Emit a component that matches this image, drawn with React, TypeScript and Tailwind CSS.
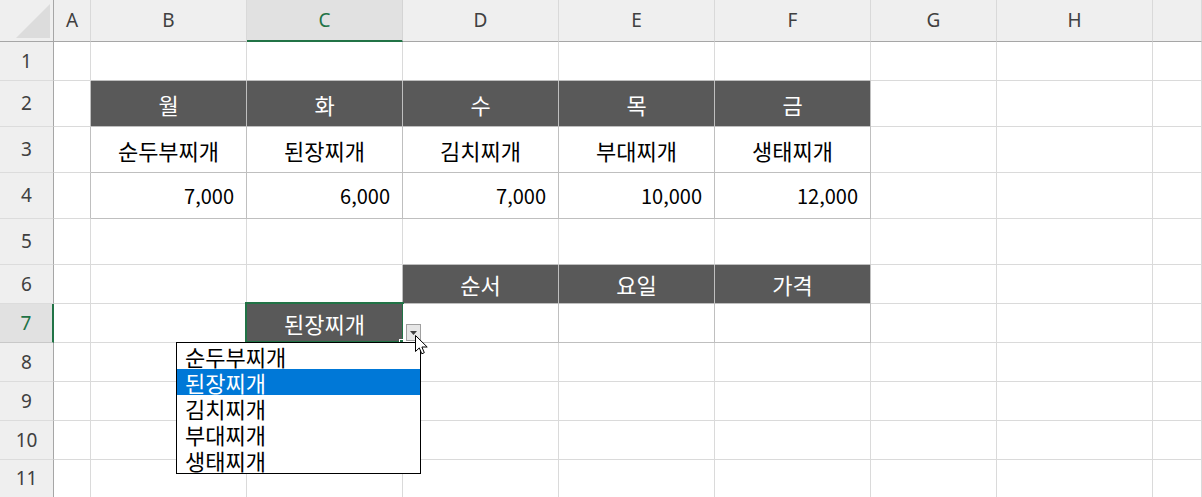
import React from "react";

const letters = ["", "A", "B", "C", "D", "E", "F", "G", "H", ""];
const rowCount = 11;

type Cell = { text: string; dark?: boolean; num?: boolean };

const data: Record<string, Cell> = {
  "2-2": { text: "월", dark: true },
  "2-3": { text: "화", dark: true },
  "2-4": { text: "수", dark: true },
  "2-5": { text: "목", dark: true },
  "2-6": { text: "금", dark: true },
  "3-2": { text: "순두부찌개" },
  "3-3": { text: "된장찌개" },
  "3-4": { text: "김치찌개" },
  "3-5": { text: "부대찌개" },
  "3-6": { text: "생태찌개" },
  "4-2": { text: "7,000", num: true },
  "4-3": { text: "6,000", num: true },
  "4-4": { text: "7,000", num: true },
  "4-5": { text: "10,000", num: true },
  "4-6": { text: "12,000", num: true },
  "6-4": { text: "순서", dark: true },
  "6-5": { text: "요일", dark: true },
  "6-6": { text: "가격", dark: true },
  "7-3": { text: "된장찌개", dark: true },
};

const menu = ["순두부찌개", "된장찌개", "김치찌개", "부대찌개", "생태찌개"];

function inTable(r: number, c: number) {
  return (r >= 2 && r <= 4 && c >= 2 && c <= 6) || (r >= 6 && r <= 7 && c >= 4 && c <= 6);
}

function ColHeader({ c }: { c: number }) {
  const active = c === 3;
  return (
    <div
      className={
        active
          ? "flex items-center justify-center bg-[#e1e1e1] border-r border-r-[#d4d4d4] border-b-2 border-b-[#217346] text-[#217346] text-[19px] font-['Noto_Sans',sans-serif]"
          : "flex items-center justify-center bg-[#efefef] border-r border-r-[#d9d9d9] border-b border-b-[#a6a6a6] text-[#404040] text-[19px] font-['Noto_Sans',sans-serif]"
      }
    >
      {letters[c]}
    </div>
  );
}

function RowHeader({ r }: { r: number }) {
  const active = r === 7;
  return (
    <div
      className={
        active
          ? "flex items-center justify-center bg-[#e1e1e1] border-r-2 border-r-[#217346] border-b border-b-[#c8c8c8] text-[#217346] text-[19px] font-['Noto_Sans',sans-serif]"
          : "flex items-center justify-center bg-[#efefef] border-r border-r-[#a6a6a6] border-b border-b-[#dcdcdc] text-[#404040] text-[19px] font-['Noto_Sans',sans-serif]"
      }
    >
      {r}
    </div>
  );
}

function DataCell({ r, c }: { r: number; c: number }) {
  const cell = data[`${r}-${c}`];
  const right = inTable(r, c) || inTable(r, c + 1) ? "border-r-[#bfbfbf]" : "border-r-[#dadada]";
  const bottom = inTable(r, c) || inTable(r + 1, c) ? "border-b-[#bfbfbf]" : "border-b-[#dadada]";
  const bg = cell?.dark ? "bg-[#595959] text-white" : "bg-white text-black";
  const type = cell?.num ? "justify-end pr-3 text-[20px]" : "justify-center text-[22px]";
  const selected = r === 7 && c === 3;
  return (
    <div className={`relative flex items-center border-r border-b leading-none font-['Noto_Sans_CJK_KR',sans-serif] ${right} ${bottom} ${bg} ${type}`}>
      {cell?.text}
      {selected && (
        <>
          <div className="absolute -left-[2px] -top-[2px] -right-[2px] -bottom-[1px] border-2 border-[#217346]" />
          <div className="absolute -right-[3px] -bottom-[3px] w-[6px] h-[6px] bg-[#217346] border border-white" />
        </>
      )}
    </div>
  );
}

function Cursor() {
  return (
    <svg width="14" height="22" viewBox="0 0 14 22" className="absolute left-[415px] top-[335px]">
      <path
        d="M0.5 0.5 L0.5 16.5 L4.3 12.9 L6.8 18.8 L9.3 17.7 L6.9 12 L12.2 12 Z"
        fill="white"
        stroke="black"
        strokeWidth="1"
      />
    </svg>
  );
}

export default function App() {
  const rows = Array.from({ length: rowCount }, (_, i) => i + 1);
  const cols = Array.from({ length: 9 }, (_, i) => i + 1);
  return (
    <div className="relative w-[1202px] h-[497px] overflow-hidden bg-white">
      <div className="grid grid-cols-[54px_37px_156px_156px_156px_156px_156px_126px_156px_49px] grid-rows-[42px_39px_46px_46px_46px_46px_39px_39px_39px_39px_39px_38px]">
        <div className="relative bg-[#efefef] border-r border-r-[#a6a6a6] border-b border-b-[#a6a6a6]">
          <svg width="34" height="34" viewBox="0 0 34 34" className="absolute right-[3px] bottom-[3px]">
            <polygon points="34,0 34,34 0,34" fill="#dcdcdc" />
          </svg>
        </div>
        {cols.map((c) => (
          <ColHeader key={`h-${c}`} c={c} />
        ))}
        {rows.map((r) => (
          <React.Fragment key={`r-${r}`}>
            <RowHeader r={r} />
            {cols.map((c) => (
              <DataCell key={`${r}-${c}`} r={r} c={c} />
            ))}
          </React.Fragment>
        ))}
      </div>

      <div className="absolute left-[406px] top-[324px] w-[15px] h-[17px] bg-[#e6e6e6] border border-[#a0a0a0] flex items-center justify-center">
        <svg width="7" height="4" viewBox="0 0 7 4">
          <polygon points="0,0 7,0 3.5,4" fill="#404040" />
        </svg>
      </div>

      <div className="absolute left-[176px] top-[342px] w-[245px] h-[132px] flex flex-col bg-white border border-black font-['Noto_Sans_CJK_KR',sans-serif] text-[22px] leading-none">
        {menu.map((m) => (
          <div
            key={m}
            className={
              m === "된장찌개"
                ? "h-[26px] flex items-center pl-2 bg-[#0078d7] text-white"
                : "h-[26px] flex items-center pl-2 text-black"
            }
          >
            {m}
          </div>
        ))}
      </div>

      <Cursor />
    </div>
  );
}
